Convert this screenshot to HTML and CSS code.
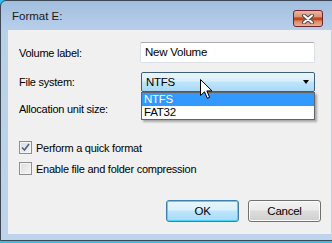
FILE: index.html
```html
<!DOCTYPE html>
<html>
<head>
<meta charset="utf-8"/>
<title>Format E:</title>
<link rel="stylesheet" href="styles.css">
</head>
<body>
<div class="window">
  <div class="titlebar">
    <span class="title">Format E:</span>
    <span class="close">
      <svg width="14" height="10" viewBox="0 0 14 10">
        <path d="M3 1.5 L11 8.5 M11 1.5 L3 8.5" stroke="#4a4a4a" stroke-width="4" stroke-linecap="round"/>
        <path d="M3 1.5 L11 8.5 M11 1.5 L3 8.5" stroke="#ffffff" stroke-width="2" stroke-linecap="round"/>
      </svg>
    </span>
  </div>

  <div class="client">
    <div class="field-row">
      <label class="lbl">Volume label:</label>
      <div class="textbox">New Volume</div>
    </div>

    <div class="field-row row-combo">
      <label class="lbl">File system:</label>
      <div class="combo">
        <span class="combo-value">NTFS</span>
        <span class="combo-arrow"></span>
        <ul class="combo-list">
          <li class="selected">NTFS</li>
          <li>FAT32</li>
        </ul>
      </div>
    </div>

    <div class="field-row row-alloc">
      <label class="lbl">Allocation unit size:</label>
    </div>

    <div class="check-row first">
      <span class="checkbox checked">
        <svg width="9" height="9" viewBox="0 0 9 9">
          <path d="M1 4.5 L3.5 7 L8 1" fill="none" stroke="#4d6185" stroke-width="1.6"/>
        </svg>
      </span>
      <span>Perform a quick format</span>
    </div>

    <div class="check-row">
      <span class="checkbox"></span>
      <span>Enable file and folder compression</span>
    </div>

    <div class="buttons">
      <button class="btn default">OK</button>
      <button class="btn">Cancel</button>
    </div>

    <!-- mouse pointer over the open list -->
    <svg class="pointer" width="13" height="21" viewBox="0 0 13 21">
      <path d="M0.5 0.5 L0.5 16.5 L4.5 12.8 L7.3 19.3 L9.6 18.3 L6.9 11.9 L12 11.9 Z" fill="#ffffff" stroke="#000000" stroke-width="1"/>
    </svg>
  </div>
</div>
</body>
</html>
```

FILE: styles.css
```css
html, body {
   margin: 0;
   padding: 0;
}

body {
   width: 332px;
   height: 243px;
   overflow: hidden;
   background-color: #2fc2ee;
   font-family: "Liberation Sans", Arial, sans-serif;
   font-size: 11px;
   letter-spacing: -0.25px;
   color: #000;
}

.window {
   box-sizing: border-box;
   width: 340px;
   height: 241px;
   border: 1px solid #3d4756;
   border-radius: 6px 0 0 0;
   background: linear-gradient(#a2bedf, #b9d0ea 30px, #bed4ec);
   display: flex;
   flex-direction: column;
}

.titlebar {
   height: 29px;
   display: flex;
   align-items: flex-start;
   justify-content: space-between;
   padding: 0 16px 0 11px;
}

.title {
   font-size: 11.5px;
   letter-spacing: 0;
   margin-top: 9px;
   color: #1a1a1a;
}

.close {
   margin-top: 9px;
   width: 28px;
   height: 15px;
   border: 1px solid #6b2430;
   border-radius: 3px;
   background: linear-gradient(#eab59f, #dc9478 40%, #c2491e 45%, #c2491e 60%, #d9835f 65%, #e8b39c);
   display: flex;
   align-items: center;
   justify-content: center;
}

.client {
   position: relative;
   flex: 1;
   margin: 0 8px 6px 7px;
   padding: 12px 0 0 11px;
   background-color: #f0f0f0;
}

.field-row {
   display: grid;
   grid-template-columns: 121px 175px;
   align-items: center;
   height: 21px;
}

.row-combo {
   margin-top: 9px;
   height: 20px;
}

.row-alloc {
   margin-top: 7px;
   height: 20px;
}

.textbox {
   box-sizing: border-box;
   height: 21px;
   padding: 3px 0 0 4px;
   background: #fff;
   border: 1px solid #dbdfe6;
   border-top-color: #abadb3;
   border-radius: 2px;
   font-size: 11.5px;
}

.combo {
   position: relative;
   box-sizing: border-box;
   height: 20px;
   margin-left: 1px;
   border: 1px solid #3c5f7e;
   border-radius: 2px;
   background: linear-gradient(#e9f5fc, #d9effb 45%, #bee5fb 50%, #a8d9f6);
   display: flex;
   align-items: center;
   padding-left: 4px;
   font-size: 11.5px;
}

.combo-value {
   flex: 1;
}

.combo-arrow {
   width: 0;
   height: 0;
   margin-right: 5px;
   border-left: 3.5px solid transparent;
   border-right: 3.5px solid transparent;
   border-top: 4px solid #000;
}

.combo-list {
   position: absolute;
   top: 19px;
   left: -1px;
   right: -1px;
   margin: 0;
   padding: 0;
   list-style: none;
   background: #fff;
   border: 1px solid #646464;
   box-shadow: 2px 2px 2px rgba(0, 0, 0, 0.3);
}

.combo-list li {
   height: 13px;
   line-height: 13px;
   padding-left: 2px;
}

.combo-list li.selected {
   background-color: #3399ff;
   color: #fff;
}

.check-row {
   display: flex;
   align-items: center;
   height: 13px;
   margin-top: 8px;
}

.check-row.first {
   margin-top: 22px;
}

.checkbox {
   box-sizing: border-box;
   width: 13px;
   height: 13px;
   margin-right: 4px;
   border: 1px solid #8e8f8f;
   background: linear-gradient(135deg, #dcdcdc, #f6f6f6);
   box-shadow: inset 0 0 0 1px #f4f4f4;
   display: flex;
   align-items: center;
   justify-content: center;
}

.buttons {
   display: flex;
   justify-content: flex-end;
   gap: 9px;
   margin: 25px 10px 0 0;
}

.btn {
   box-sizing: border-box;
   width: 73px;
   height: 22px;
   padding: 0;
   font-family: "Liberation Sans", Arial, sans-serif;
   font-size: 11.5px;
   letter-spacing: -0.25px;
   color: #000;
   border: 1px solid #707070;
   border-radius: 3px;
   background: linear-gradient(#f2f2f2, #ebebeb 45%, #dddddd 50%, #cfcfcf);
   box-shadow: inset 0 0 0 1px #fbfbfb;
}

.btn.default {
   border-color: #3c7fb1;
   background: linear-gradient(#eaf6fd, #d9f0fc 45%, #bee6fd 50%, #a7d9f5);
   box-shadow: inset 0 0 0 1px #48d7fb;
}

.pointer {
   position: absolute;
   left: 192px;
   top: 49px;
}
```
